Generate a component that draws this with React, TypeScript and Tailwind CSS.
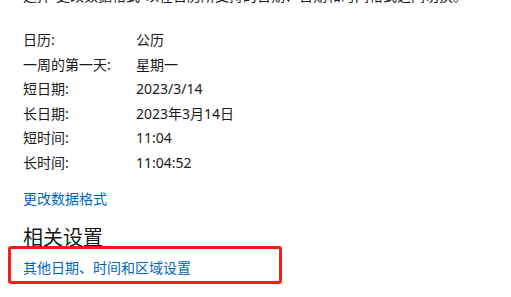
const rows: Array<[string, string]> = [
  ['日历:', '公历'],
  ['一周的第一天:', '星期一'],
  ['短日期:', '2023/3/14'],
  ['长日期:', '2023年3月14日'],
  ['短时间:', '11:04'],
  ['长时间:', '11:04:52'],
];

export default function App() {
  return (
    <div className="h-[297px] w-[511px] overflow-hidden bg-white pl-[23px] text-[14px] text-[#1a1a1a] font-['Segoe_UI','Noto_Sans','Noto_Sans_CJK_SC',sans-serif]">
      {/* intro line, scrolled mostly out of view */}
      <div className="-mt-[14px] whitespace-nowrap leading-[20px]">
        选择“更改数据格式”以在日历所支持的日期、日期和时间格式之间切换。
      </div>

      <div className="mt-[22px]">
        {rows.map(([label, value]) => (
          <div key={label} className="flex h-[24.5px] items-center leading-[24.5px]">
            <span className="w-[113px] shrink-0">{label}</span>
            <span>{value}</span>
          </div>
        ))}
      </div>

      <div className="mt-[14px] leading-[20px] text-[#0067c0]">更改数据格式</div>

      <h2 className="mt-[18px] text-[20px] leading-[22px] font-normal">相关设置</h2>

      <div className="-ml-[15px] mt-[-3px] h-[38px] w-[274px] rounded-[3px] border-[3px] border-[#fa1a1a] pl-[12px] pt-[8px]">
        <span className="leading-[20px] text-[#0067c0]">其他日期、时间和区域设置</span>
      </div>
    </div>
  );
}
